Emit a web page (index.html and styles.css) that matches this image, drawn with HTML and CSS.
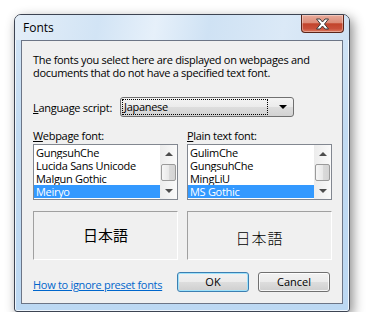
FILE: index.html
```html
<!DOCTYPE html>
<html>
<head>
	<meta charset="utf-8">
	<meta name="viewport" content="width=device-width, initial-scale=1">
	<title>Fonts</title>
	<link rel="stylesheet" href="styles.css">
</head>

<body>
	<div class="window">
		<div class="titlebar">
			<span class="title">Fonts</span>
			<div class="close">
				<svg width="15" height="12" viewBox="0 0 15 12">
					<polygon points="1.5,1 5,1 7.5,4 10,1 13.5,1 9.5,6 13.5,11 10,11 7.5,8 5,11 1.5,11 5.5,6" fill="#fff" stroke="#3b3b3b" stroke-width="1" stroke-linejoin="round"/>
				</svg>
			</div>
		</div>

		<div class="client">
			<p class="intro">The fonts you select here are displayed on webpages and documents that do not have a specified text font.</p>

			<div class="lang">
				<span class="lang-label"><u>L</u>anguage script:</span>
				<div class="combo">
					<span class="combo-text">Japanese</span>
					<span class="combo-arrow"></span>
				</div>
			</div>

			<div class="columns">
				<div class="col">
					<div class="col-label"><u>W</u>ebpage font:</div>
					<div class="listbox">
						<ul class="items">
							<li>GungsuhChe</li>
							<li>Lucida Sans Unicode</li>
							<li>Malgun Gothic</li>
							<li class="sel">Meiryo</li>
						</ul>
						<div class="scrollbar">
							<span class="sb-btn"><span class="up"></span></span>
							<span class="sb-thumb"></span>
							<span class="sb-btn bottom"><span class="down"></span></span>
						</div>
					</div>
					<div class="preview"><span class="sample">日本語</span></div>
				</div>

				<div class="col">
					<div class="col-label"><u>P</u>lain text font:</div>
					<div class="listbox">
						<ul class="items">
							<li>GulimChe</li>
							<li>GungsuhChe</li>
							<li>MingLiU</li>
							<li class="sel">MS Gothic</li>
						</ul>
						<div class="scrollbar">
							<span class="sb-btn"><span class="up"></span></span>
							<span class="sb-thumb"></span>
							<span class="sb-btn bottom"><span class="down"></span></span>
						</div>
					</div>
					<div class="preview"><span class="sample gothic">日本語</span></div>
				</div>
			</div>

			<div class="footer">
				<a href="#" class="help">How to ignore preset fonts</a>
				<button class="btn default">OK</button>
				<button class="btn">Cancel</button>
			</div>
		</div>
	</div>
</body>
</html>
```

FILE: styles.css
```css
body {
	margin: 0;
	background: #fff;
	font-family: "Open Sans", "Noto Sans", sans-serif;
	font-size: 11px;
	letter-spacing: -0.3px;
	color: #000;
}

/* window frame */
.window {
	margin: 14px 0 0 14px;
	width: 336px;
	height: 298px;
	box-sizing: border-box;
	border: 1px solid #3d4452;
	border-radius: 7px 7px 3px 3px;
	padding: 0 6px 7px 6px;
	display: flex;
	flex-direction: column;
	background: linear-gradient(to bottom, #d3e5f6 0%, #c2dbf2 40%, #bcd8f2 100%);
	box-shadow: inset 0 0 0 1px rgba(255,255,255,0.75), 3px 4px 12px rgba(0,0,0,0.45);
}

.titlebar {
	height: 25px;
	display: flex;
	align-items: flex-start;
	justify-content: space-between;
	margin: 0 -6px;
	padding: 0 5px 0 8px;
	border-radius: 6px 6px 0 0;
	background: linear-gradient(100deg, #e4eef8 0%, #d2e4f5 25%, #e6f0fa 42%, #cfe2f4 58%, #dbe9f7 80%, #cfe1f3 100%);
}

.title {
	line-height: 25px;
	font-size: 12px;
	letter-spacing: 0;
	color: #000;
}

.close {
	width: 43px;
	height: 18px;
	box-sizing: border-box;
	border: 1px solid #5a2418;
	border-top: none;
	border-radius: 0 0 4px 4px;
	display: flex;
	align-items: center;
	justify-content: center;
	background: linear-gradient(to bottom, #e9ab9b 0%, #dc8c78 45%, #c2442b 52%, #c9503a 80%, #de7a5f 100%);
	box-shadow: inset 0 0 0 1px rgba(255,255,255,0.35);
}

/* client area */
.client {
	flex: 1;
	border: 1px solid #6c7586;
	background: #f0f0f0;
	padding: 13px 10px 0 11px;
}

.intro {
	margin: 0;
	line-height: 12.5px;
}

.lang {
	margin-top: 18px;
	display: flex;
	align-items: center;
	height: 20px;
}

.lang-label {
	width: 87px;
	white-space: nowrap;
}

.combo {
	width: 174px;
	height: 20px;
	box-sizing: border-box;
	border: 1px solid #707070;
	border-radius: 3px;
	background: linear-gradient(to bottom, #f4f4f4 0%, #ebebeb 50%, #dddddd 51%, #d2d2d2 100%);
	display: flex;
	align-items: center;
	padding: 0 6px 0 2px;
}

.combo-text {
	flex: 1;
	height: 14px;
	line-height: 14px;
	outline: 1px dotted #000;
	outline-offset: 0;
	margin-right: 12px;
	padding-left: 1px;
}

.combo-arrow {
	width: 0;
	height: 0;
	border-left: 4px solid transparent;
	border-right: 4px solid transparent;
	border-top: 4px solid #000;
}

/* font columns */
.columns {
	margin-top: 12px;
	display: flex;
	gap: 9px;
}

.col {
	width: 145px;
}

.col-label {
	line-height: 13px;
	height: 13px;
	white-space: nowrap;
}

.listbox {
	margin-top: 2px;
	height: 56px;
	box-sizing: border-box;
	border: 1px solid #828790;
	background: #fff;
	display: flex;
}

.items {
	list-style: none;
	margin: 0;
	padding: 1px 0 0 0;
	flex: 1;
}

.items li {
	height: 13px;
	line-height: 13px;
	padding-left: 2px;
	white-space: nowrap;
	overflow: hidden;
}

.items li.sel {
	background: #3399ff;
	color: #fff;
}

.scrollbar {
	width: 17px;
	display: flex;
	flex-direction: column;
	background: linear-gradient(to right, #ececec, #fafafa);
}

.sb-btn {
	height: 17px;
	display: flex;
	align-items: center;
	justify-content: center;
}

.sb-btn.bottom {
	margin-top: auto;
}

.up {
	border-left: 4px solid transparent;
	border-right: 4px solid transparent;
	border-bottom: 4px solid #4d4d4d;
}

.down {
	border-left: 4px solid transparent;
	border-right: 4px solid transparent;
	border-top: 4px solid #4d4d4d;
}

.sb-thumb {
	margin: 2px 1px 0 1px;
	height: 15px;
	border: 1px solid #9a9a9a;
	border-radius: 2px;
	background: linear-gradient(to right, #f6f6f6 0%, #e9e9e9 50%, #dadada 51%, #d4d4d4 100%);
}

.preview {
	margin-top: 11px;
	height: 49px;
	box-sizing: border-box;
	border: 1px solid #a0a0a0;
	border-right-color: #fff;
	border-bottom-color: #fff;
	display: flex;
	align-items: center;
	justify-content: center;
}

.sample {
	font-family: "Noto Sans CJK JP", sans-serif;
	font-size: 15px;
	letter-spacing: 0;
	margin-top: -3px;
}

.sample.gothic {
	font-weight: 300;
	letter-spacing: 1px;
	margin-top: 4px;
}

/* buttons */
.footer {
	margin-top: 11px;
	display: flex;
	align-items: center;
	gap: 9px;
	padding-right: 2px;
}

.help {
	flex: 1;
	color: #0066cc;
	text-decoration: underline;
	margin-top: 6px;
	white-space: nowrap;
}

.btn {
	width: 72px;
	height: 20px;
	font-family: inherit;
	font-size: 11px;
	color: #000;
	padding: 0;
	border: 1px solid #707070;
	border-radius: 3px;
	background: linear-gradient(to bottom, #f2f2f2 0%, #ebebeb 50%, #dddddd 51%, #cfcfcf 100%);
	box-shadow: inset 0 0 0 1px rgba(255,255,255,0.8);
}

.btn.default {
	border-color: #3c7fb1;
	box-shadow: inset 0 0 0 1px #9fe2fb;
}
```
